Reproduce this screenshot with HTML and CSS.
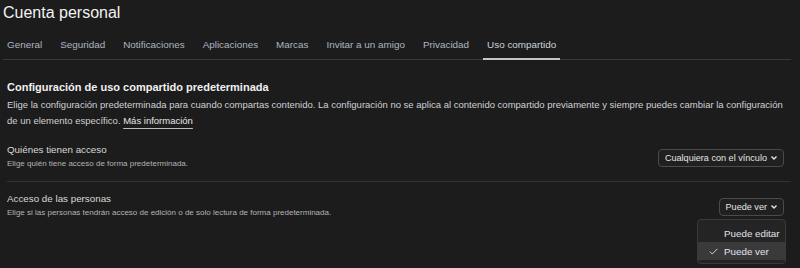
FILE: index.html
```html
<!DOCTYPE html>
<html lang="es">
<head>
    <meta charset="UTF-8">
    <title>Cuenta personal</title>
    <link rel="stylesheet" href="styles.css">
</head>
<body>
    <div class="page">
        <h1 class="title">Cuenta personal</h1>

        <nav class="tabs">
            <a class="tab">General</a>
            <a class="tab">Seguridad</a>
            <a class="tab">Notificaciones</a>
            <a class="tab">Aplicaciones</a>
            <a class="tab">Marcas</a>
            <a class="tab">Invitar a un amigo</a>
            <a class="tab">Privacidad</a>
            <a class="tab active">Uso compartido</a>
        </nav>

        <div class="section">
            <h2 class="section-title">Configuración de uso compartido predeterminada</h2>
            <p class="section-desc">Elige la configuración predeterminada para cuando compartas contenido. La configuración no se aplica al contenido compartido previamente y siempre puedes cambiar la configuración de un elemento específico. <a class="more-link">Más información</a></p>

            <div class="setting">
                <div class="setting-text">
                    <div class="setting-name">Quiénes tienen acceso</div>
                    <div class="setting-hint">Elige quién tiene acceso de forma predeterminada.</div>
                </div>
                <button class="select">Cualquiera con el vínculo
                    <svg width="8" height="6" viewBox="0 0 8 6"><path d="M1.5 1.5 L4 4 L6.5 1.5" fill="none" stroke="currentColor" stroke-width="1.4"/></svg>
                </button>
            </div>

            <div class="setting last">
                <div class="setting-text">
                    <div class="setting-name">Acceso de las personas</div>
                    <div class="setting-hint">Elige si las personas tendrán acceso de edición o de solo lectura de forma predeterminada.</div>
                </div>
                <div class="select-wrap">
                    <button class="select">Puede ver
                        <svg width="8" height="6" viewBox="0 0 8 6"><path d="M1.5 1.5 L4 4 L6.5 1.5" fill="none" stroke="currentColor" stroke-width="1.4"/></svg>
                    </button>
                    <div class="menu">
                        <div class="menu-item">
                            <span class="check"></span>
                            <span>Puede editar</span>
                        </div>
                        <div class="menu-item selected">
                            <span class="check">
                                <svg width="9" height="7" viewBox="0 0 9 7"><path d="M0.8 3.6 L3.2 6 L8.4 0.8" fill="none" stroke="currentColor" stroke-width="1"/></svg>
                            </span>
                            <span>Puede ver</span>
                        </div>
                    </div>
                </div>
            </div>
        </div>
    </div>
</body>
</html>
```

FILE: styles.css
```css
body {
    margin: 0;
    background-color: #1c1c1c;
    color: #e8e8e8;
    font-family: 'Liberation Sans', Arial, sans-serif;
}

.page {
    min-height: 268px;
    padding: 0 9px 0 3px;
}

.title {
    margin: 0;
    padding-top: 2px;
    font-size: 16px;
    font-weight: normal;
    line-height: 22px;
    color: #f2f2f2;
}

.tabs {
    display: flex;
    gap: 10px;
    margin-top: 12px;
    border-bottom: 1px solid #3a3a3a;
}

.tab {
    padding: 3px 4px 7px;
    font-size: 9.9px;
    line-height: 12px;
    color: #aeb6c1;
    border-bottom: 2px solid transparent;
    margin-bottom: -1px;
}

.tab.active {
    color: #cdd3da;
    border-bottom-color: #c4c4c4;
}

.section {
    padding-left: 4px;
}

.section-title {
    margin: 20px 0 0;
    font-size: 11px;
    font-weight: bold;
    line-height: 14px;
    color: #f0f0f0;
}

.section-desc {
    max-width: 784px;
    margin: 3px 0 0;
    font-size: 9.5px;
    line-height: 16px;
    color: #cdd1d6;
}

.more-link {
    color: #e6e6e6;
    text-decoration: underline;
    text-decoration-color: #bdbdbd;
    text-underline-offset: 4px;
}

.setting {
    display: flex;
    justify-content: space-between;
    align-items: flex-start;
    margin-top: 14px;
    padding-bottom: 11px;
    border-bottom: 1px solid #333;
}

.setting.last {
    margin-top: 0;
    padding-top: 10px;
    border-bottom: none;
}

.setting-name {
    font-size: 9.8px;
    line-height: 14px;
    color: #d8d8d8;
}

.setting-hint {
    margin-top: 1px;
    font-size: 8px;
    line-height: 12px;
    color: #b3b3b3;
}

.select {
    display: flex;
    align-items: center;
    gap: 3px;
    height: 18px;
    margin: 6px 7px 0 0;
    padding: 0 5px 0 6px;
    background-color: #202020;
    border: 1px solid #4a4a4a;
    border-radius: 4px;
    color: #e4e4e4;
    font-family: inherit;
    font-size: 9.1px;
}

.select-wrap {
    position: relative;
}

.menu {
    position: absolute;
    top: 27px;
    right: 5px;
    width: 87px;
    padding: 4px 0 3px;
    background-color: #242424;
    border: 1px solid #3a3a3a;
    border-radius: 4px;
}

.menu-item {
    display: flex;
    align-items: center;
    height: 18px;
    padding-left: 11px;
    font-size: 9.8px;
    color: #e2e2ee;
}

.menu-item.selected {
    background-color: #3a3a3a;
}

.check {
    display: flex;
    width: 9px;
    margin-right: 6px;
    color: #cfcfcf;
}
```
